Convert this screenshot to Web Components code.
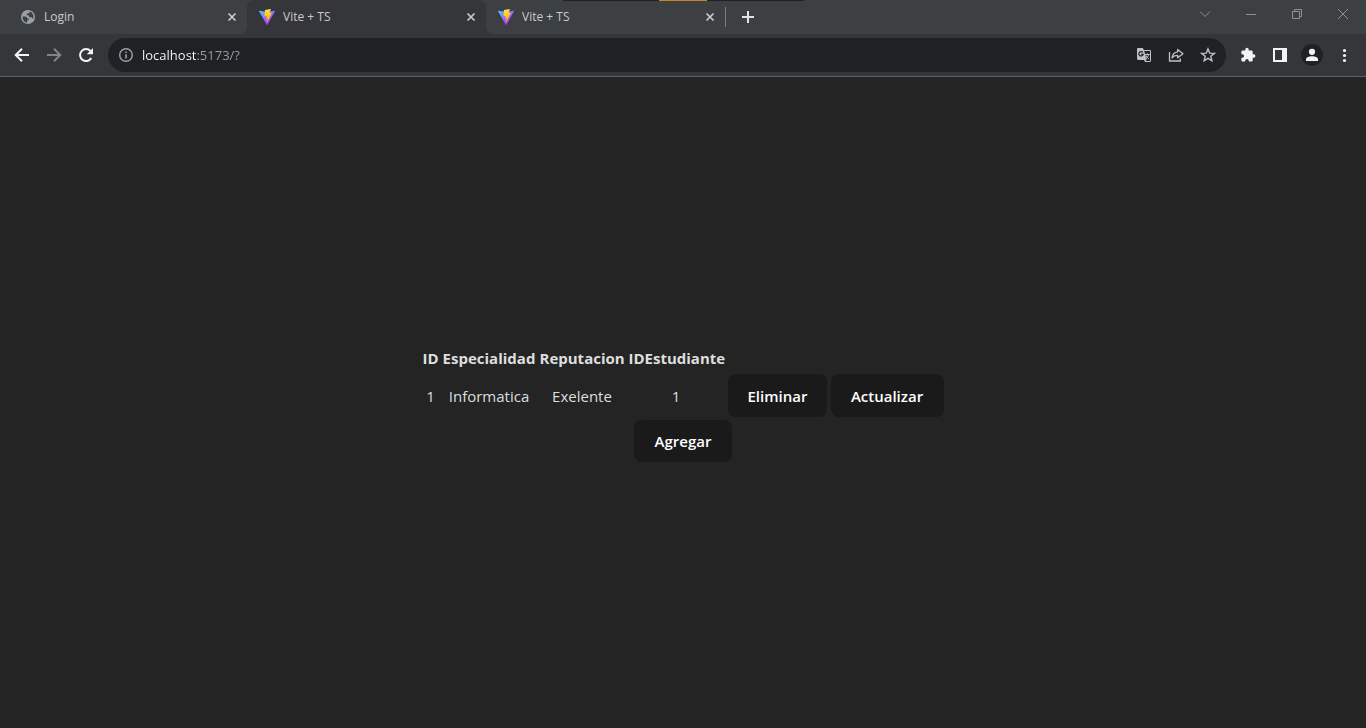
<!DOCTYPE html>
<html lang="es">
<head>
<meta charset="utf-8">
<title>Vite + TS</title>
<style>
html, body { margin: 0; height: 100%; }
body { background: #242424; font-family: "Open Sans", "Noto Sans", sans-serif; }
</style>
</head>
<body>
<browser-window></browser-window>

<script>
const ICONS = {
  close: '<path d="M4.500 4.500l7 7M11.500 4.500l-7 7" fill="none" stroke="currentColor" stroke-width="1.7"/>',
  plus: '<path d="M8 2v12M2 8h12" fill="none" stroke="currentColor" stroke-width="2"/>',
  globe: '<circle cx="8" cy="8" r="7" fill="#9aa0a6"/><path d="M2.500 7.600h2.300c1.700 0 2.400.8 2.400 1.900h1.500v1.800H7v2.400C4.200 13.200 2.400 11 2.500 7.600zM9.800 2.600c0 1.300-.7 1.900-1.900 1.900H6.800v1.700h1.500c.6 0 .9.4.9.9v1.200h2c.7 0 1.100.5 1.200 1.300h.9C14.100 6.500 12.600 3.700 9.800 2.600z" fill="#3c4043"/>',
  back: '<path d="M15 8H2M8 1.700L1.700 8 8 14.300" fill="none" stroke="currentColor" stroke-width="2"/>',
  forward: '<path d="M1 8h13M8 1.700L14.300 8 8 14.300" fill="none" stroke="currentColor" stroke-width="2"/>',
  reload: '<path d="M13.300 11A6 6 0 1 1 12.500 4" fill="none" stroke="currentColor" stroke-width="2"/><path d="M15 1v6.200H8.800z" fill="currentColor"/>',
  info: '<circle cx="8" cy="8" r="6.300" fill="none" stroke="currentColor" stroke-width="1.400"/><path d="M7.200 4.400h1.600V6H7.200zM7.200 7.200h1.600v4.400H7.200z" fill="currentColor"/>',
  translate: '<path d="M1 2.200C1 1.500 1.500 1 2.200 1h4.600l1 2h6c.7 0 1.200.5 1.200 1.200v9.600c0 .7-.5 1.200-1.200 1.200H9l-1-2H2.200C1.500 13 1 12.500 1 11.800z" fill="currentColor"/><path d="M8.200 4l2.500 9-1.300 1h4.600V4z" fill="#202124"/><path d="M6.800 5.400a2.200 2.200 0 1 0 .4 1.900H5.200" fill="none" stroke="#202124" stroke-width="1.200"/><path d="M9 7.500h4.800M11.300 6.300v1.200M12.700 7.500c-.4 1.800-1.500 3-2.700 3.800M9.900 8.300c.6 1.600 1.600 2.700 3.100 3.700" fill="none" stroke="currentColor"/>',
  share: '<path d="M1.500 5v9h10.800v-2.500" fill="none" stroke="currentColor" stroke-width="1.300"/><path d="M9.700 2.500L15 6.700l-5.300 4.100V8.300C7 8.300 5.200 9.200 4 11c.3-3 2-5.700 5.700-6.200z" fill="none" stroke="currentColor" stroke-width="1.300" stroke-linejoin="round"/>',
  star: '<path d="M8 1.900l1.700 4.200 4.600.3-3.500 2.900 1.100 4.500L8 11.300l-3.900 2.500 1.100-4.500-3.500-2.900 4.600-.3z" fill="none" stroke="currentColor" stroke-width="1.400"/>',
  puzzle: '<path d="M13.700 7.300h-1V4.700c0-.7-.6-1.300-1.300-1.300H8.700v-.9a1.700 1.700 0 0 0-3.400 0v.9H2.700c-.7 0-1.300.6-1.300 1.300v2.500h.9a1.800 1.800 0 0 1 0 3.600h-.9v2.500c0 .7.6 1.300 1.300 1.300h2.500v-.9a1.800 1.800 0 0 1 3.600 0v.9h2.600c.7 0 1.300-.6 1.300-1.300v-2.600h1a1.700 1.700 0 0 0 0-3.400z" fill="currentColor"/>',
  panel: '<path d="M1 1h14v14H1zM3 3v10h7V3z" fill="currentColor" fill-rule="evenodd"/>',
  person: '<circle cx="8" cy="4.800" r="3.100" fill="currentColor"/><path d="M2 14v-1.600C2 10.300 5 9.200 8 9.200s6 1.100 6 3.200V14z" fill="currentColor"/>',
  dots: '<circle cx="8.500" cy="3.500" r="1.600" fill="currentColor"/><circle cx="8.500" cy="8.500" r="1.600" fill="currentColor"/><circle cx="8.500" cy="13.500" r="1.600" fill="currentColor"/>',
  chevron: '<path d="M3 5.500L8 10.500l5-5" fill="none" stroke="currentColor"/>',
  minimize: '<path d="M3 8.500h10" stroke="currentColor"/>',
  restore: '<path d="M3.500 5.500h7v7h-7zM5.500 5.500v-2h7v7h-2" fill="none" stroke="currentColor"/>',
  cross: '<path d="M3 3l10 10M13 3L3 13" fill="none" stroke="currentColor"/>',
  vite: '<defs><linearGradient id="a" x1="0" y1="0" x2=".6" y2=".8"><stop stop-color="#41d1ff"/><stop offset="1" stop-color="#bd34fe"/></linearGradient><linearGradient id="b" x1=".4" y1="0" x2=".5" y2="1"><stop stop-color="#ffea83"/><stop offset=".1" stop-color="#ffdd35"/><stop offset="1" stop-color="#ffa800"/></linearGradient></defs><g transform="scale(.0625)"><path fill="url(#a)" d="M255.153 37.938L134.897 252.976c-2.483 4.44-8.862 4.466-11.382.048L.875 37.958c-2.746-4.814 1.371-10.646 6.827-9.67l120.385 21.517a6.537 6.537 0 0 0 2.322-.004l117.867-21.483c5.438-.991 9.574 4.796 6.877 9.62Z"/><path fill="url(#b)" d="M185.432.063L96.44 17.501a3.268 3.268 0 0 0-2.634 3.014l-5.474 92.456a3.268 3.268 0 0 0 3.997 3.378l24.777-5.718c2.318-.535 4.413 1.507 3.936 3.838l-7.361 36.047c-.495 2.426 1.782 4.5 4.151 3.78l15.304-4.649c2.372-.72 4.652 1.36 4.15 3.788l-11.698 56.621c-.732 3.542 3.979 5.473 5.943 2.437l1.313-2.028l72.516-144.72c1.215-2.423-.88-5.186-3.54-4.672l-25.505 4.922c-2.396.462-4.435-1.77-3.759-4.114l16.646-57.705c.677-2.35-1.37-4.583-3.769-4.113Z"/></g>'
};

class BaseElement extends HTMLElement {
  connectedCallback() {
    if (!this.shadowRoot) this.attachShadow({ mode: 'open' }).innerHTML = this.render();
  }
}

customElements.define('ui-icon', class extends BaseElement {
  render() {
    return `<style>:host{display:block;flex:none;width:16px;height:16px}svg{display:block}</style>
      <svg width="16" height="16" viewBox="0 0 16 16" aria-hidden="true">${ICONS[this.getAttribute('name')]}</svg>`;
  }
});

/* A borderless button holding one icon; its box is set by --w and --h. */
customElements.define('icon-button', class extends BaseElement {
  render() {
    return `<style>
      :host{display:block;flex:none}
      button{display:flex;align-items:center;justify-content:center;width:var(--w,32px);height:var(--h,32px);
        margin:0;padding:0;border:0;border-radius:var(--radius,0);background:var(--bg,none);color:inherit}
      </style>
      <button type="button" aria-label="${this.getAttribute('label')}"><ui-icon name="${this.getAttribute('icon')}"></ui-icon></button>`;
  }
});

customElements.define('browser-tab', class extends BaseElement {
  render() {
    return `<style>
      :host{display:flex;align-items:center;gap:8px;box-sizing:border-box;flex:0 1 239px;min-width:0;height:34px;
        padding:0 7px 0 12px;position:relative;color:#c9cbcd;font-size:12px;line-height:16px;white-space:nowrap}
      :host([active]){background:#35363a;border-radius:8px 8px 0 0}
      :host([active])::before,:host([active])::after{content:"";position:absolute;bottom:0;width:8px;height:8px}
      :host([active])::before{right:100%;background:radial-gradient(circle at 0 0,#3c4043 8px,#35363a 8px)}
      :host([active])::after{left:100%;background:radial-gradient(circle at 100% 0,#3c4043 8px,#35363a 8px)}
      span{flex:1;min-width:0;overflow:hidden}
      icon-button{--w:16px;--h:16px}
      </style>
      <ui-icon name="${this.getAttribute('icon')}"></ui-icon>
      <span><slot></slot></span>
      <icon-button icon="close" label="Cerrar pestaña"></icon-button>`;
  }
});

customElements.define('tab-strip', class extends BaseElement {
  render() {
    return `<style>
      :host{display:flex;align-items:center;height:34px;padding-left:8px;background:#3c4043;position:relative}
      .edge{position:absolute;top:0;left:0;right:0;margin:0 auto;width:241px;height:1px;background:#202124}
      .edge i{display:block;width:48px;height:1px;margin:0 auto;background:#c98428}
      .rule{flex:none;width:1px;height:20px;background:#7b7e81}
      .new{--w:28px;--h:28px;margin-left:8px;color:#dee1e6}
      .controls{display:flex;margin-left:auto;height:28px;color:#8e9193}
      .controls icon-button{--w:46px;--h:28px}
      .bar{align-self:flex-start}
      </style>
      <div class="edge"><i></i></div>
      <browser-tab icon="globe">Login</browser-tab>
      <browser-tab icon="vite" active>Vite + TS</browser-tab>
      <browser-tab icon="vite">Vite + TS</browser-tab>
      <div class="rule"></div>
      <icon-button class="new" icon="plus" label="Nueva pestaña"></icon-button>
      <div class="controls bar">
        <icon-button icon="chevron" label="Buscar pestañas"></icon-button>
        <icon-button icon="minimize" label="Minimizar"></icon-button>
        <icon-button icon="restore" label="Restaurar"></icon-button>
        <icon-button icon="cross" label="Cerrar"></icon-button>
      </div>`;
  }
});

customElements.define('address-bar', class extends BaseElement {
  render() {
    return `<style>
      :host{display:flex;align-items:center;flex:1;min-width:0;height:34px;padding:0 2px;border-radius:17px;background:#202124;color:#bdc1c6}
      input{flex:1;min-width:0;height:20px;margin:0;padding:0;border:0;outline:0;font:13px/20px "Open Sans","Noto Sans",sans-serif;
        color:#9aa0a6;background:linear-gradient(90deg,#fff 55px,#9aa0a6 55px);
        -webkit-background-clip:text;background-clip:text;-webkit-text-fill-color:transparent}
      .info{color:#9aa0a6}
      </style>
      <icon-button class="info" icon="info" label="Información del sitio"></icon-button>
      <input type="text" aria-label="Dirección" value="localhost:5173/?">
      <icon-button icon="translate" label="Traducir"></icon-button>
      <icon-button icon="share" label="Compartir"></icon-button>
      <icon-button icon="star" label="Marcador"></icon-button>`;
  }
});

customElements.define('tool-bar', class extends BaseElement {
  render() {
    return `<style>
      :host{display:flex;align-items:center;height:42px;padding:0 6px;border-bottom:1px solid #5f6064;background:#35363a;color:#f1f3f4}
      address-bar{margin:0 6px}
      .off{color:#828488}
      .user{--w:22px;--h:22px;--bg:#202124;--radius:50%;padding:0 5px}
      </style>
      <icon-button icon="back" label="Atrás"></icon-button>
      <icon-button class="off" icon="forward" label="Adelante"></icon-button>
      <icon-button icon="reload" label="Recargar"></icon-button>
      <address-bar></address-bar>
      <icon-button icon="puzzle" label="Extensiones"></icon-button>
      <icon-button icon="panel" label="Panel lateral"></icon-button>
      <icon-button class="user" icon="person" label="Perfil"></icon-button>
      <icon-button icon="dots" label="Menú"></icon-button>`;
  }
});

customElements.define('action-button', class extends BaseElement {
  render() {
    return `<style>
      :host{display:block}
      button{display:block;box-sizing:border-box;width:100%;height:var(--h,43px);margin:0;padding:0 19px;border:1px solid transparent;
        border-radius:8px;background:#1a1a1a;color:#fff;font:600 15px/20px "Open Sans","Noto Sans",sans-serif;white-space:nowrap}
      </style><button type="button"><slot></slot></button>`;
  }
});

customElements.define('student-table', class extends BaseElement {
  render() {
    return `<style>
      :host{display:block}
      table{table-layout:fixed;width:527px;border-spacing:2px;border-collapse:separate;
        font-size:15px;line-height:24px;color:#dedede;text-align:center;white-space:nowrap}
      th,td{padding:1px}
      th{font-weight:700}
      .id{width:16px}.spec{width:93px}.rep{width:85px}.stu{width:95px}.del{width:99px}
      </style>
      <table>
        <thead><tr><th class="id">ID</th><th class="spec">Especialidad</th><th class="rep">Reputacion</th><th class="stu">IDEstudiante</th><td class="del"></td><td></td></tr></thead>
        <tbody><tr><td>1</td><td>Informatica</td><td>Exelente</td><td>1</td>
          <td><action-button>Eliminar</action-button></td><td><action-button>Actualizar</action-button></td></tr></tbody>
      </table>`;
  }
});

customElements.define('browser-window', class extends BaseElement {
  render() {
    return `<style>
      :host{display:flex;flex-direction:column;min-height:100%}
      main{flex:1;display:flex;flex-direction:column;align-items:center;justify-content:center;background:#242424}
      .add{width:98px;--h:42px}
      </style>
      <tab-strip></tab-strip>
      <tool-bar></tool-bar>
      <main>
        <student-table></student-table>
        <action-button class="add">Agregar</action-button>
      </main>`;
  }
});
</script>
</body>
</html>
